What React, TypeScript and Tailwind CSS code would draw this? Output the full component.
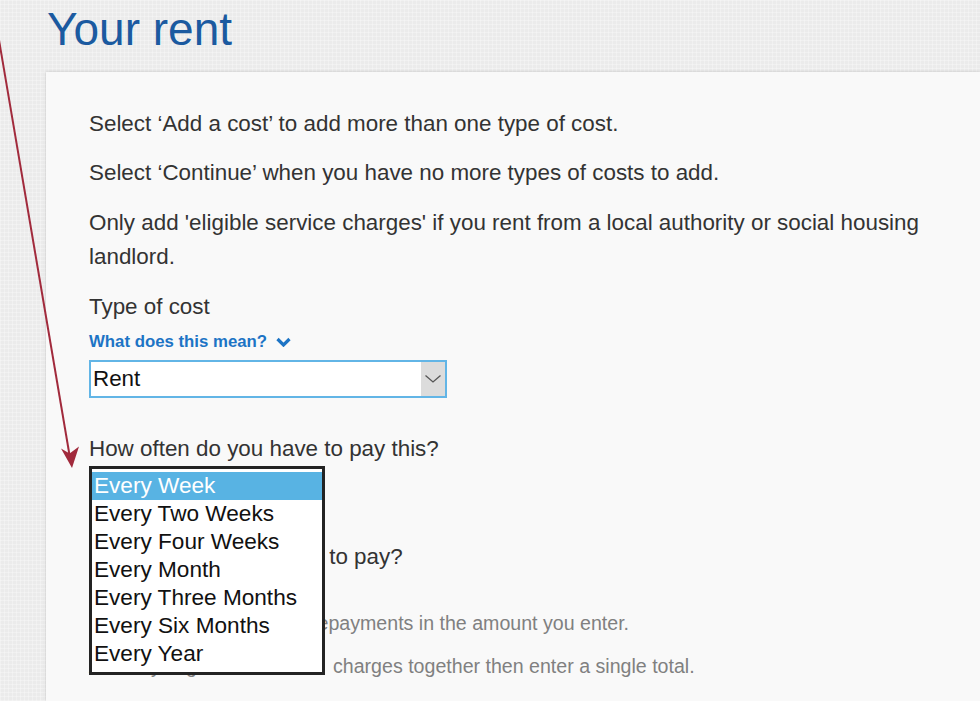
export default function App() {
  const options = [
    "Every Week",
    "Every Two Weeks",
    "Every Four Weeks",
    "Every Month",
    "Every Three Months",
    "Every Six Months",
    "Every Year",
  ];
  return (
    <div className="relative h-[701px] w-[980px] overflow-hidden bg-[#ebebeb] bg-[repeating-linear-gradient(0deg,rgba(255,255,255,0.28)_0px,rgba(255,255,255,0.28)_1px,transparent_1px,transparent_4px),repeating-linear-gradient(90deg,rgba(255,255,255,0.28)_0px,rgba(255,255,255,0.28)_1px,transparent_1px,transparent_4px)] font-['Liberation_Sans',Arial,sans-serif]">
      <h1 className="ml-[47px] mt-[7px] h-[44px] text-[46px] font-normal leading-[44px] text-[#1b5aa0]">
        Your rent
      </h1>
      <div className="ml-[46px] mt-[21px] h-[629px] bg-[#f9f9f9] pl-[43px] pr-[24px] pt-[36px] text-[22.4px] leading-[32px] text-[#333] shadow-[0_0_3px_rgba(0,0,0,0.18)]">
        <p>Select ‘Add a cost’ to add more than one type of cost.</p>
        <p className="mt-[17px]">Select ‘Continue’ when you have no more types of costs to add.</p>
        <p className="mt-[17px] leading-[34px]">
          Only add 'eligible service charges' if you rent from a local authority or social housing landlord.
        </p>
        <p className="mt-[17px]">Type of cost</p>
        <a className="mt-[9px] flex h-[20px] w-max items-center gap-[9px] text-[16.8px] font-bold leading-[20px] text-[#1d74c5]">
          What does this mean?
          <svg width="15" height="10" viewBox="0 0 15 10" fill="none">
            <polyline points="1.5,2 7.5,8 13.5,2" stroke="#1d74c5" strokeWidth="3.2" />
          </svg>
        </a>
        <div className="mt-[8px] flex h-[38px] w-[358px] border-2 border-[#62b5e6] bg-white">
          <span className="flex-1 pl-[2px] text-[22.4px] leading-[34px] text-[#111]">Rent</span>
          <span className="flex w-[24px] items-center justify-center bg-[#dcdcdc]">
            <svg width="16" height="8" viewBox="0 0 16 8" fill="none">
              <polyline points="0.5,0.5 8,7 15.5,0.5" stroke="#555" strokeWidth="1.3" />
            </svg>
          </span>
        </div>
        <p className="mt-[35px]">How often do you have to pay this?</p>
        <div className="relative mt-[1px] h-[38px] w-[236px]">
          <div className="h-[38px] w-[236px] border-2 border-[#bbb] bg-white" />
          <ul className="absolute left-0 top-0 z-10 h-[209px] w-[236px] border-[3px] border-[#232323] bg-white pb-[4px] pt-[3px] text-[22.6px] leading-[28px] text-[#111]">
            {options.map((o, i) => (
              <li
                key={o}
                className={
                  i === 0
                    ? "h-[28px] whitespace-nowrap bg-[#58b3e3] pl-[2px] text-white"
                    : "h-[28px] whitespace-nowrap pl-[2px]"
                }
              >
                {o}
              </li>
            ))}
          </ul>
        </div>
        <p className="mt-[37px]">How much do you have to pay?</p>
        <p className="mt-[37px] whitespace-nowrap text-[19.6px] leading-[26px] text-[#808080]">
          <span className="inline-block w-[222px]">Do not include any loan</span>
          repayments in the amount you enter.
        </p>
        <p className="mt-[17px] whitespace-nowrap text-[19.6px] leading-[26px] text-[#808080]">
          <span className="inline-block w-[244px]">Add any eligible service</span>
          charges together then enter a single total.
        </p>
      </div>
      <svg
        className="pointer-events-none absolute left-0 top-0 z-20"
        width="100"
        height="480"
        viewBox="0 0 100 480"
        fill="none"
      >
        <line x1="-1" y1="40" x2="69.5" y2="455" stroke="#a12a3c" strokeWidth="2" />
        <polygon points="72,468 61,448.5 69.6,453.5 79,446.5" fill="#a12a3c" />
      </svg>
    </div>
  );
}
